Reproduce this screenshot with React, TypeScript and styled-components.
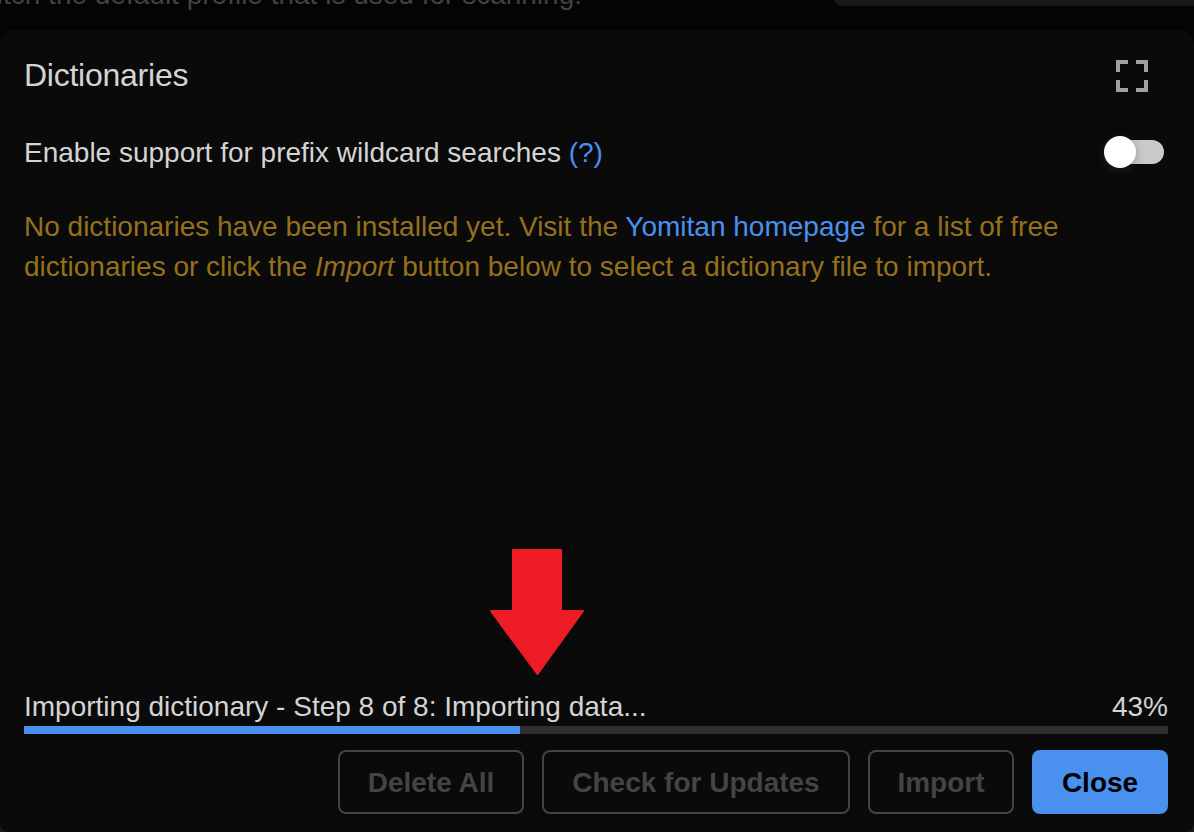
import React, { useState } from 'react';
import styled, { createGlobalStyle } from 'styled-components';

const GlobalStyle = createGlobalStyle`
  * { box-sizing: border-box; }
  body {
    margin: 0;
    background: #040404;
    color: #d4d4d4;
    font-family: "Liberation Sans", Arial, sans-serif;
    font-size: 28px;
    line-height: 40px;
    overflow: hidden;
  }
`;

const Page = styled.div`
  display: flex;
  flex-direction: column;
  height: 832px;
  overflow: hidden;
  background: linear-gradient(#040404 0 800px, #1a1a1a 800px);
`;

const PageStrip = styled.div`
  display: flex;
  justify-content: space-between;
  align-items: flex-end;
  flex: none;
  height: 30px;
  overflow: hidden;
`;

const SettingDescription = styled.div`
  display: flex;
  justify-content: flex-end;
  width: 582px;
  height: 55px;
  color: #424242;
  white-space: nowrap;
`;

const ProfileSelect = styled.div`
  width: 360px;
  height: 64px;
  margin-bottom: 24px;
  border-radius: 8px 0 0 8px;
  background: #191919;
`;

const Modal = styled.section`
  display: flex;
  flex-direction: column;
  height: 802px;
  flex: none;
  border-radius: 14px 14px 8px 8px;
  background: #0a0a0a;
`;

const Header = styled.header`
  display: flex;
  justify-content: space-between;
  align-items: center;
  height: 92px;
  padding: 0 46px 0 24px;
`;

const Title = styled.h1`
  margin: 0;
  padding-bottom: 2px;
  font-size: 32px;
  font-weight: 400;
  letter-spacing: -0.25px;
`;

const IconButton = styled.button`
  display: flex;
  padding: 0;
  border: 0;
  background: none;
  color: #a0a0a0;
`;

const Body = styled.div`
  flex: 1;
  padding: 0 26px 0 24px;
`;

const SettingRow = styled.div`
  display: flex;
  justify-content: space-between;
  align-items: center;
  height: 60px;
  padding-right: 4px;
`;

const SettingLabel = styled.span`
  padding-top: 2px;
`;

const Link = styled.a`
  color: #4a90ee;
  text-decoration: none;
`;

const Track = styled.button<{ $on: boolean }>`
  display: flex;
  align-items: center;
  justify-content: ${(p) => (p.$on ? 'flex-end' : 'flex-start')};
  width: 56px;
  height: 24px;
  padding: 0;
  border: 0;
  border-radius: 12px;
  background: ${(p) => (p.$on ? '#4a90ee' : '#cacaca')};
`;

const Knob = styled.span`
  flex: none;
  width: 32px;
  height: 32px;
  margin: 0 -4px;
  border-radius: 50%;
  background: #fff;
  box-shadow: 0 2px 8px rgba(0, 0, 0, 0.3), 0 2px 8px rgba(255, 255, 255, 0.12);
`;

const Warning = styled.p`
  margin: 25px 0 0;
  color: #95711c;
`;

const Progress = styled.div`
  flex: none;
  padding: 0 26px 0 24px;
`;

const ProgressLabel = styled.div`
  display: flex;
  justify-content: space-between;
  height: 39px;
`;

const ProgressTrack = styled.div`
  height: 8px;
  background: #2f2f2f;
`;

const ProgressBar = styled.div`
  height: 8px;
  background: #4a90ee;
`;

const Footer = styled.footer`
  display: flex;
  justify-content: flex-end;
  gap: 18px;
  padding: 16px 26px 18px;
`;

const Button = styled.button<{ $primary?: boolean; $width: number }>`
  width: ${(p) => p.$width}px;
  height: 64px;
  padding: 2px 0 0;
  border: 2px solid ${(p) => (p.$primary ? '#4a90ee' : '#444')};
  border-radius: 8px;
  background: ${(p) => (p.$primary ? '#4a90ee' : 'transparent')};
  color: ${(p) => (p.$primary ? '#000' : '#444')};
  font: bold 28px "Liberation Sans", Arial, sans-serif;
  white-space: nowrap;
`;

const Pointer = styled.svg`
  position: absolute;
  left: 490px;
  top: 549px;
`;

const percent = 43;

export default function App() {
  const [wildcards, setWildcards] = useState(false);
  return (
    <Page>
      <GlobalStyle />
      <PageStrip>
        <SettingDescription>Switch the default profile that is used for scanning.</SettingDescription>
        <ProfileSelect />
      </PageStrip>
      <Modal>
        <Header>
          <Title>Dictionaries</Title>
          <IconButton aria-label="Expand">
            <svg width="32" height="32" viewBox="0 0 32 32" fill="none" stroke="currentColor" strokeWidth="4">
              <path d="M2 12V2H12M20 2H30V12M30 20V30H20M12 30H2V20" />
            </svg>
          </IconButton>
        </Header>
        <Body>
          <SettingRow>
            <SettingLabel>
              Enable support for prefix wildcard searches <Link>(?)</Link>
            </SettingLabel>
            <Track $on={wildcards} onClick={() => setWildcards(!wildcards)} aria-label="Prefix wildcard searches">
              <Knob />
            </Track>
          </SettingRow>
          <Warning>
            No dictionaries have been installed yet. Visit the <Link>Yomitan homepage</Link> for a list of free
            dictionaries or click the <em>Import</em> button below to select a dictionary file to import.
          </Warning>
        </Body>
        <Progress>
          <ProgressLabel>
            <span>Importing dictionary - Step 8 of 8: Importing data...</span>
            <span>{percent}%</span>
          </ProgressLabel>
          <ProgressTrack>
            <ProgressBar style={{ width: `${percent + 0.36}%` }} />
          </ProgressTrack>
        </Progress>
        <Footer>
          <Button $width={186}>Delete All</Button>
          <Button $width={308}>Check for Updates</Button>
          <Button $width={146}>Import</Button>
          <Button $width={136} $primary>Close</Button>
        </Footer>
      </Modal>
      <Pointer width="94" height="127" viewBox="0 0 94 127">
        <path
          d="M23 1H71V62H93L47.5 125L1 62H23Z"
          fill="#ee1c25"
          stroke="#ee1c25"
          strokeWidth="2"
          strokeLinejoin="round"
        />
      </Pointer>
    </Page>
  );
}
